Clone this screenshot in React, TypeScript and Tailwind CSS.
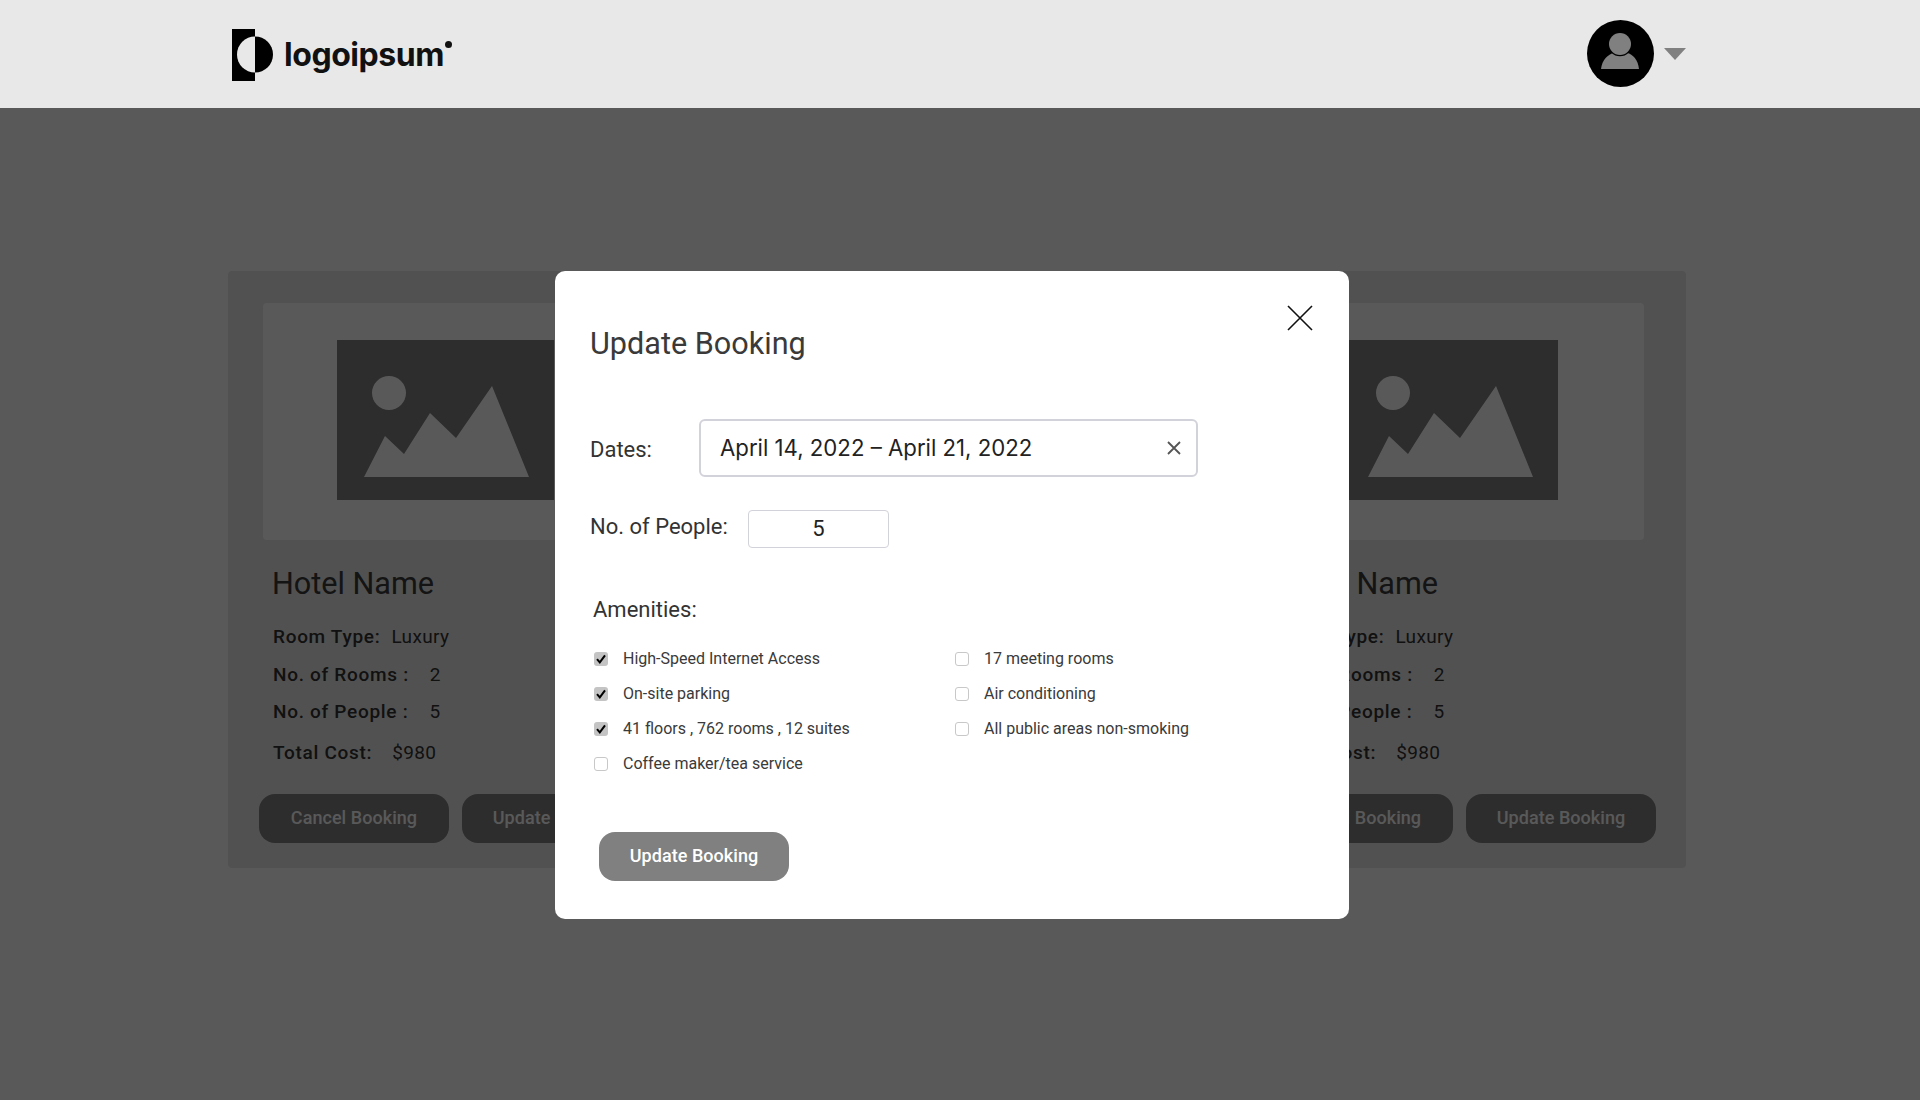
function Mountain() {
  return (
    <svg width="217" height="160" viewBox="0 0 217 160" className="block shrink-0">
      <rect width="217" height="160" fill="#808080" />
      <circle cx="52" cy="53" r="17" fill="#ffffff" />
      <polygon points="27,137 48,96 67,114 93,73 119,98 155,46 192,137" fill="#ffffff" />
    </svg>
  );
}

function Row({ label, value, gap, className }: { label: string; value: string; gap: string; className: string }) {
  return (
    <div className={`flex items-center text-[19px] leading-[24px] ${className}`}>
      <span className="font-medium tracking-[0.7px]">{label}</span>
      <span className={`tracking-[0.35px] ${gap}`}>{value}</span>
    </div>
  );
}

function HotelCard() {
  return (
    <div className="w-[393px] flex flex-col">
      <div className="ml-[4px] w-[377px] h-[237px] bg-white rounded-[4px] pl-[74px] pt-[37px]">
        <Mountain />
      </div>
      <h2 className="ml-[13px] mt-[24px] text-[30.6px] leading-[40px] font-normal text-[#3a3a3a]">Hotel Name</h2>
      <div className="ml-[14px] mt-[21px] text-[#333333]">
        <Row label="Room Type:" value="Luxury" gap="ml-[11px]" className="" />
        <Row label="No. of Rooms :" value="2" gap="ml-[21px]" className="mt-[14px]" />
        <Row label="No. of People :" value="5" gap="ml-[21px]" className="mt-[13px]" />
        <Row label="Total Cost:" value="$980" gap="ml-[20px]" className="mt-[17px]" />
      </div>
      <div className="mt-[29px] flex gap-[13px]">
        <button className="w-[190px] h-[49px] pb-[2px] rounded-[16px] bg-[#808080] text-white text-[18px] tracking-[0.05px] font-medium">Cancel Booking</button>
        <button className="w-[190px] h-[49px] pb-[2px] rounded-[16px] bg-[#808080] text-white text-[18px] tracking-[0.05px] font-medium">Update Booking</button>
      </div>
    </div>
  );
}

function Amenity({ label, checked }: { label: string; checked?: boolean }) {
  return (
    <div className="h-[35px] flex items-center gap-[15px] text-[16px] text-[#3a3a3a]">
      {checked ? (
        <span className="w-[14px] h-[14px] rounded-[3px] bg-[#c4c4c4] flex items-center justify-center">
          <svg width="12" height="12" viewBox="0 0 12 12">
            <path d="M2 6.2 L4.8 9.4 L10 2.4" fill="none" stroke="#000" strokeWidth="2" />
          </svg>
        </span>
      ) : (
        <span className="w-[14px] h-[14px] rounded-[3px] bg-white border border-[#c8c8c8]" />
      )}
      <span>{label}</span>
    </div>
  );
}

export default function App() {
  return (
    <div className="relative h-[1100px] bg-white overflow-hidden font-['Roboto',sans-serif]">
      <header className="relative z-10 h-[108px] bg-[#e8e8e8] flex items-center justify-between pl-[232px] pr-[234px]">
        <div className="flex items-center relative">
          <svg width="42" height="56" viewBox="0 0 42 56" className="block">
            <rect x="0" y="3" width="23" height="52" fill="#000" />
            <path d="M23 10.5 A18 18 0 0 0 23 46.5 Z" fill="#e8e8e8" />
            <path d="M23 10.5 A18 18 0 0 1 23 46.5 Z" fill="#000" />
          </svg>
          <span className="ml-[10px] mt-[2px] text-[32px] leading-[40px] font-bold tracking-[-0.45px] text-[#111] font-['Inter',sans-serif]">logoipsum</span>
          <span className="absolute left-[213px] top-[15px] w-[7px] h-[7px] rounded-full bg-[#111]" />
        </div>
        <div className="flex items-center">
          <svg width="67" height="67" viewBox="0 0 67 67" className="block -mt-[1px]">
            <circle cx="33.5" cy="33.5" r="33.5" fill="#000" />
            <path d="M14 49 C15 40 21 34 27 33 L40 33 C46 34 51 40 52 49 Z" fill="#808080" />
            <circle cx="33" cy="24" r="12.2" fill="#000" />
            <circle cx="33" cy="24" r="11" fill="#808080" />
          </svg>
          <svg width="22" height="12" viewBox="0 0 22 12" className="block ml-[10px] -mt-[1px]">
            <polygon points="0,0 22,0 11,12" fill="#808080" />
          </svg>
        </div>
      </header>

      <main className="pt-[163px] pl-[228px]">
        <section className="w-[1458px] h-[597px] bg-[#e8e8e8] rounded-[4px] pt-[32px] pl-[31px] pr-[30px] flex justify-between">
          <HotelCard />
          <HotelCard />
        </section>
      </main>

      <div className="absolute inset-0 bg-black/65 pt-[271px] pl-[555px]">
        <div className="relative w-[794px] h-[648px] bg-white rounded-[10px] pl-[35px] text-[#333333]">
          <svg width="26" height="26" viewBox="0 0 26 26" className="absolute left-[732px] top-[34px]">
            <path d="M1 1 L25 25 M25 1 L1 25" stroke="#111" strokeWidth="1.6" fill="none" />
          </svg>
          <h1 className="pt-[53px] text-[30.6px] leading-[40px] font-normal text-[#3a3a3a]">Update Booking</h1>
          <div className="mt-[55px] flex items-center">
            <span className="w-[110px] text-[22px] mt-[3px]">Dates:</span>
            <div className="-ml-[1px] w-[499px] h-[58px] border-2 border-[#d2d2da] rounded-[6px] flex items-center justify-between pl-[19px] pr-[15px] text-[22.2px] text-[#222] font-['Inter',sans-serif]">
              <span>April 14, 2022 – April 21, 2022</span>
              <svg width="14" height="14" viewBox="0 0 14 14">
                <path d="M1 1 L13 13 M13 1 L1 13" stroke="#555" strokeWidth="1.8" fill="none" />
              </svg>
            </div>
          </div>
          <div className="mt-[33px] flex items-center">
            <span className="w-[158px] text-[22px] -mt-[5px]">No. of People:</span>
            <div className="w-[141px] h-[38px] pb-[1px] border border-[#d2d2da] rounded-[4px] flex items-center justify-center text-[22px] text-[#222]">5</div>
          </div>
          <div className="ml-[3px] mt-[47px] text-[22px] leading-[30px]">Amenities:</div>
          <div className="ml-[4px] mt-[16px] flex">
            <div className="w-[361px]">
              <Amenity label="High-Speed Internet Access" checked />
              <Amenity label="On-site parking" checked />
              <Amenity label="41 floors , 762 rooms , 12 suites" checked />
              <Amenity label="Coffee maker/tea service" />
            </div>
            <div>
              <Amenity label="17 meeting rooms" />
              <Amenity label="Air conditioning" />
              <Amenity label="All public areas non-smoking" />
            </div>
          </div>
          <button className="ml-[9px] mt-[51px] w-[190px] h-[49px] pb-[2px] rounded-[16px] bg-[#808080] text-white text-[18px] tracking-[0.05px] font-medium">Update Booking</button>
        </div>
      </div>
    </div>
  );
}
